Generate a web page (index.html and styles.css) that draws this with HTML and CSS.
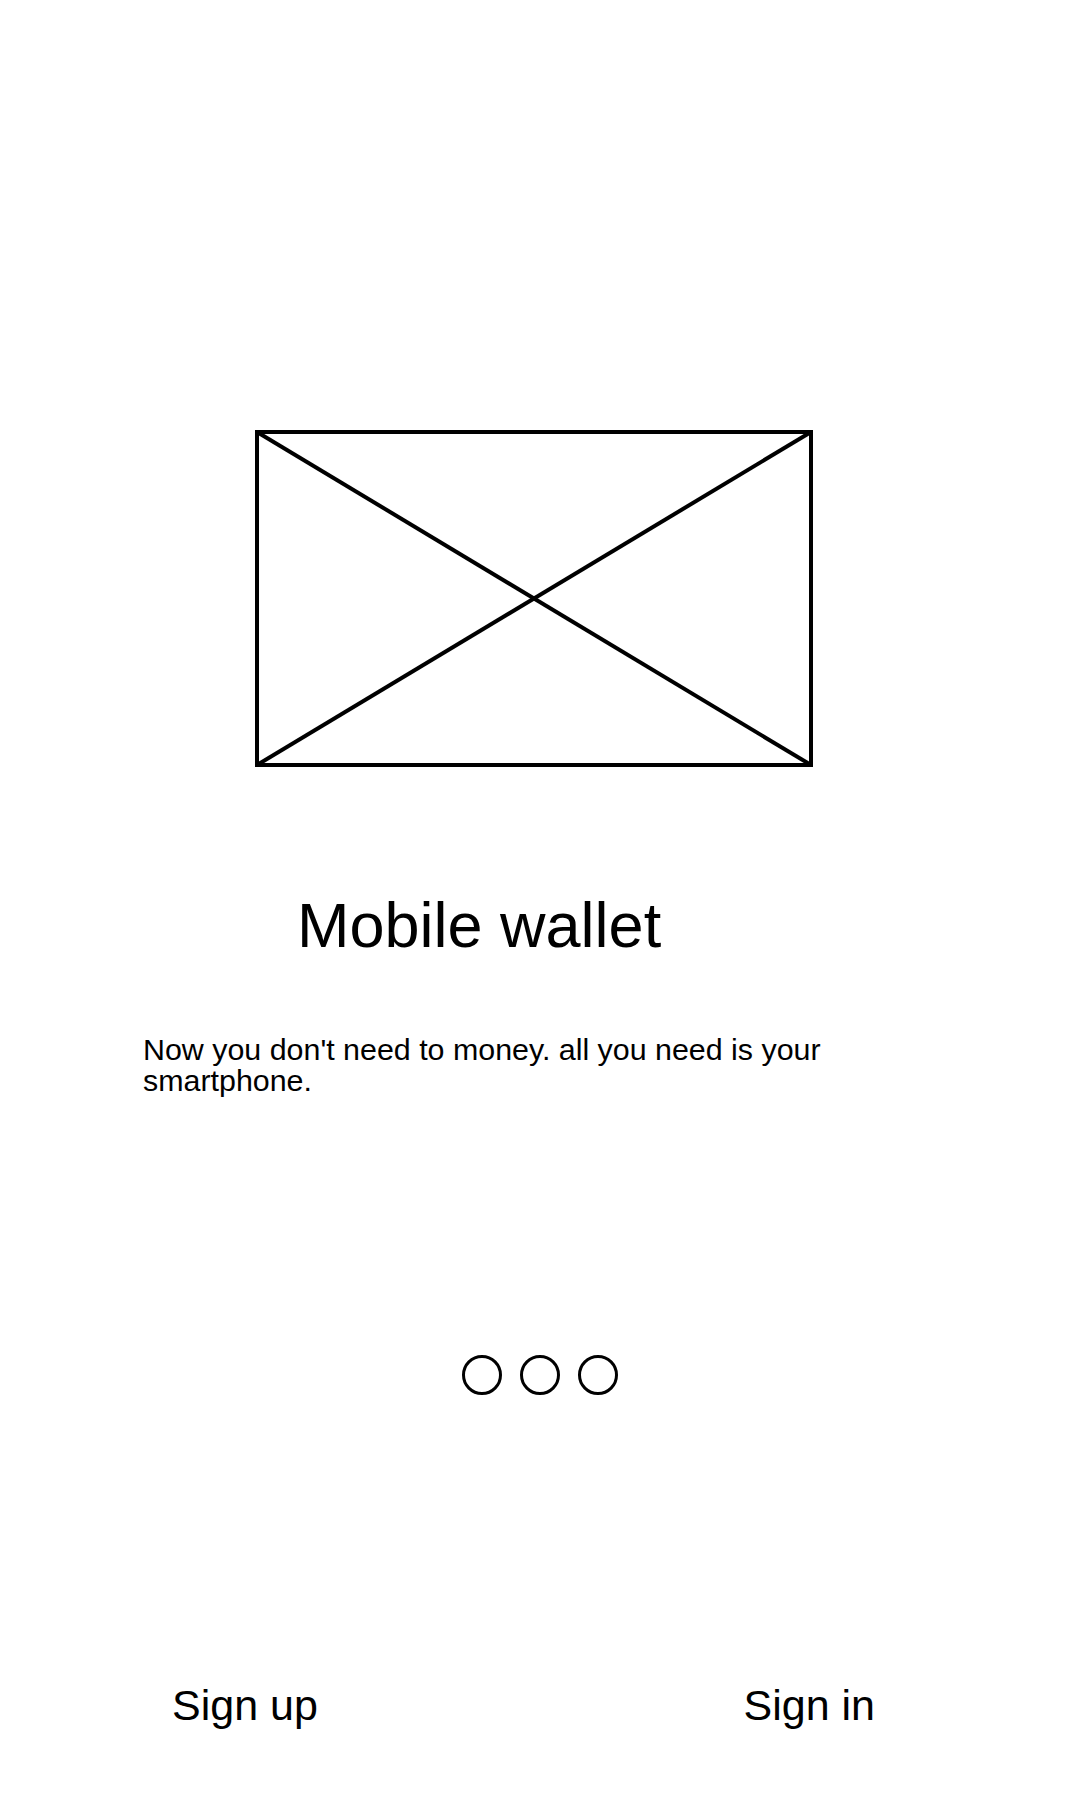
FILE: index.html
```html
<!DOCTYPE html>
<html lang="en">
<head>
<meta charset="utf-8">
<title>Mobile wallet</title>
<link rel="stylesheet" href="styles.css">
</head>
<body>
<main class="screen">
  <div class="hero">
    <svg class="placeholder" width="558" height="337" viewBox="0 0 558 337" aria-hidden="true">
      <rect x="2" y="2" width="554" height="333" fill="none" stroke="#000" stroke-width="4"/>
      <line x1="2" y1="2" x2="556" y2="335" stroke="#000" stroke-width="4"/>
      <line x1="556" y1="2" x2="2" y2="335" stroke="#000" stroke-width="4"/>
    </svg>
  </div>
  <h1 class="title">Mobile wallet</h1>
  <p class="lead">Now you don't need to money. all you need is your smartphone.</p>
  <div class="dots">
    <span class="dot"></span>
    <span class="dot"></span>
    <span class="dot"></span>
  </div>
  <div class="actions">
    <a class="action">Sign up</a>
    <a class="action">Sign in</a>
  </div>
</main>
</body>
</html>
```

FILE: styles.css
```css
html, body {
  margin: 0;
  padding: 0;
  background: #fff;
}

body {
  font-family: "Liberation Sans", Arial, sans-serif;
  color: #000;
}

.screen {
  width: 1080px;
  height: 1800px;
  display: flex;
  flex-direction: column;
  box-sizing: border-box;
  padding-top: 430px;
}

.hero {
  padding-left: 255px;
  height: 337px;
}

.placeholder {
  display: block;
}

.title {
  margin: 126px 0 0 297px;
  font-size: 63px;
  line-height: 64px;
  font-weight: normal;
}

.lead {
  margin: 77px 0 0 143px;
  max-width: 700px;
  font-size: 30.4px;
  line-height: 31px;
}

.dots {
  margin-top: 259px;
  display: flex;
  justify-content: center;
  gap: 18px;
}

.dot {
  width: 40px;
  height: 40px;
  box-sizing: border-box;
  border: 3px solid #000;
  border-radius: 50%;
}

.actions {
  margin-top: 286px;
  display: flex;
  justify-content: space-between;
  padding: 0 205px 0 172px;
}

.action {
  font-size: 43px;
  line-height: 48px;
  color: #000;
}
```
